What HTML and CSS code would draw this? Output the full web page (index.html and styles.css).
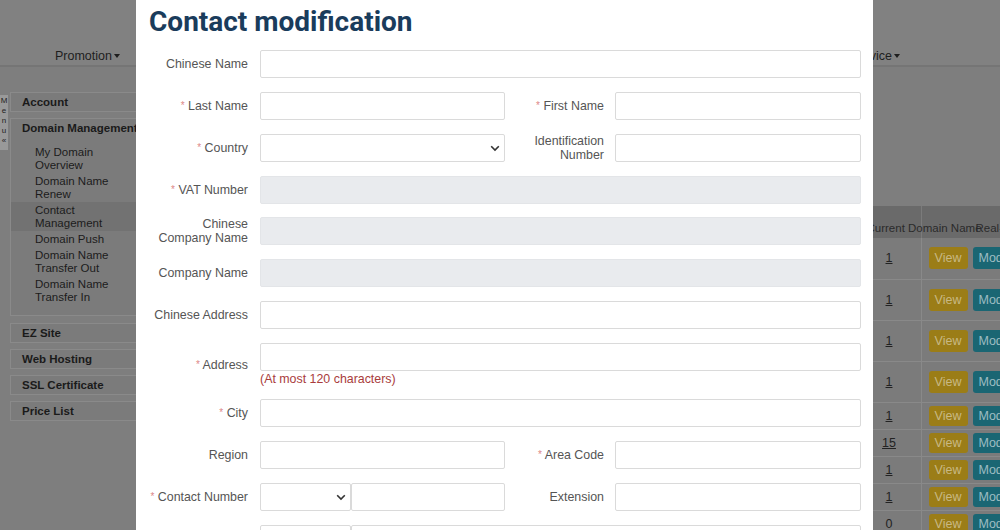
FILE: index.html
```html
<!DOCTYPE html>
<html lang="en">
<head>
<meta charset="utf-8">
<title>Contact modification</title>
<link rel="stylesheet" href="styles.css">
</head>
<body>
<div class="page">
  <header class="topbar">
    <span class="nav-item">Promotion<i class="caret"></i></span>
    <span class="nav-item nav-right">Service<i class="caret"></i></span>
  </header>
  <div class="layout">
    <div class="menu-tab"><span>M</span><span>e</span><span>n</span><span>u</span><span>«</span></div>
    <aside class="sidebar">
      <div class="sec"><div class="sec-title">Account</div></div>
      <div class="sec">
        <div class="sec-title">Domain Management</div>
        <ul class="submenu">
          <li>My Domain<br>Overview</li>
          <li>Domain Name<br>Renew</li>
          <li class="active">Contact<br>Management</li>
          <li>Domain Push</li>
          <li>Domain Name<br>Transfer Out</li>
          <li>Domain Name<br>Transfer In</li>
        </ul>
      </div>
      <div class="sec sec-gap"><div class="sec-title">EZ Site</div></div>
      <div class="sec"><div class="sec-title">Web Hosting</div></div>
      <div class="sec"><div class="sec-title">SSL Certificate</div></div>
      <div class="sec"><div class="sec-title">Price List</div></div>
    </aside>
    <main class="main">
      <table class="grid">
        <colgroup><col class="c-rest"><col class="c-count"><col class="c-act"></colgroup>
        <thead>
          <tr><th></th><th class="th-count">Current Domain Name</th><th class="th-act">Real-name Verification</th></tr>
        </thead>
        <tbody>
          <tr class="tall"><td></td><td class="count"><u>1</u></td><td class="act"><span class="btn view">View</span><span class="btn mod">Modify</span></td></tr>
          <tr class="tall"><td></td><td class="count"><u>1</u></td><td class="act"><span class="btn view">View</span><span class="btn mod">Modify</span></td></tr>
          <tr class="tall"><td></td><td class="count"><u>1</u></td><td class="act"><span class="btn view">View</span><span class="btn mod">Modify</span></td></tr>
          <tr class="tall"><td></td><td class="count"><u>1</u></td><td class="act"><span class="btn view">View</span><span class="btn mod">Modify</span></td></tr>
          <tr class="short"><td></td><td class="count"><u>1</u></td><td class="act"><span class="btn view">View</span><span class="btn mod">Modify</span></td></tr>
          <tr class="short"><td></td><td class="count"><u>15</u></td><td class="act"><span class="btn view">View</span><span class="btn mod">Modify</span></td></tr>
          <tr class="short"><td></td><td class="count"><u>1</u></td><td class="act"><span class="btn view">View</span><span class="btn mod">Modify</span></td></tr>
          <tr class="short"><td></td><td class="count"><u>1</u></td><td class="act"><span class="btn view">View</span><span class="btn mod">Modify</span></td></tr>
          <tr class="short"><td></td><td class="count">0</td><td class="act"><span class="btn view">View</span><span class="btn mod">Modify</span></td></tr>
        </tbody>
      </table>
    </main>
  </div>
</div>

<div class="modal">
  <h1 class="title">Contact modification</h1>
  <form class="form">
    <div class="row">
      <label class="lbl">Chinese Name</label>
      <div class="inp full"></div>
    </div>
    <div class="row">
      <label class="lbl"><b class="req">*</b> Last Name</label>
      <div class="inp half"></div>
      <label class="lbl lbl2"><b class="req">*</b> First Name</label>
      <div class="inp half2"></div>
    </div>
    <div class="row">
      <label class="lbl"><b class="req">*</b> Country</label>
      <div class="inp half sel"><svg class="chev" width="10" height="7" viewBox="0 0 10 7"><path d="M1.2 1.2 L5 5 L8.8 1.2" fill="none" stroke="#333" stroke-width="1.6"/></svg></div>
      <label class="lbl lbl2">Identification Number</label>
      <div class="inp half2"></div>
    </div>
    <div class="row row-tight">
      <label class="lbl"><b class="req">*</b> VAT Number</label>
      <div class="inp full dis"></div>
    </div>
    <div class="row">
      <label class="lbl">Chinese<br>Company Name</label>
      <div class="inp full dis"></div>
    </div>
    <div class="row">
      <label class="lbl">Company Name</label>
      <div class="inp full dis"></div>
    </div>
    <div class="row">
      <label class="lbl">Chinese Address</label>
      <div class="inp full"></div>
    </div>
    <div class="row row-hint">
      <label class="lbl"><b class="req">*</b> Address</label>
      <div class="fcol">
        <div class="inp"></div>
        <div class="hint">(At most 120 characters)</div>
      </div>
    </div>
    <div class="row">
      <label class="lbl"><b class="req">*</b> City</label>
      <div class="inp full"></div>
    </div>
    <div class="row">
      <label class="lbl">Region</label>
      <div class="inp half"></div>
      <label class="lbl lbl2"><b class="req">*</b> Area Code</label>
      <div class="inp half2"></div>
    </div>
    <div class="row">
      <label class="lbl"><b class="req">*</b> Contact Number</label>
      <div class="combo">
        <div class="inp sel small"><svg class="chev" width="10" height="7" viewBox="0 0 10 7"><path d="M1.2 1.2 L5 5 L8.8 1.2" fill="none" stroke="#333" stroke-width="1.6"/></svg></div>
        <div class="inp grow"></div>
      </div>
      <label class="lbl lbl2">Extension</label>
      <div class="inp half2"></div>
    </div>
    <div class="row">
      <label class="lbl">Fax Number</label>
      <div class="combo combo-full">
        <div class="inp sel small"><svg class="chev" width="10" height="7" viewBox="0 0 10 7"><path d="M1.2 1.2 L5 5 L8.8 1.2" fill="none" stroke="#333" stroke-width="1.6"/></svg></div>
        <div class="inp grow"></div>
      </div>
    </div>
  </form>
</div>
</body>
</html>
```

FILE: styles.css
```css
* { box-sizing: border-box; }
html, body { margin: 0; padding: 0; }
body {
  width: 1000px;
  height: 530px;
  overflow: hidden;
  position: relative;
  background: #7e7e7e;
  font-family: "Liberation Sans", Arial, sans-serif;
  color: #1c1c1c;
}

/* ---------- dimmed page behind the modal ---------- */
.page { width: 1000px; }
.topbar {
  height: 67px;
  background: #818181;
  border-bottom: 2px solid #757575;
  display: flex;
  padding: 48px 100px 0 55px;
}
.nav-item { font-size: 12.5px; line-height: 16px; color: #1e1e1e; white-space: nowrap; }
.nav-right { margin-left: auto; }
.caret {
  display: inline-block;
  width: 0; height: 0;
  border-left: 3.5px solid transparent;
  border-right: 3.5px solid transparent;
  border-top: 4px solid #1e1e1e;
  margin-left: 2px;
  vertical-align: 2px;
}

.layout { display: flex; }
.menu-tab {
  width: 8px;
  height: 55px;
  margin-top: 28px;
  background: #999;
  display: flex;
  flex-direction: column;
  align-items: center;
  padding-top: 1px;
  font-size: 8px;
  line-height: 10px;
  color: #222;
  flex-shrink: 0;
}
.sidebar { width: 150px; margin: 25px 0 0 2px; flex-shrink: 0; }
.sec { border: 1px solid #8a8a8a; background: #7b7b7b; margin-bottom: 6px; }
.sec-gap { margin-top: 7px; }
.sec-title {
  height: 18px;
  line-height: 18px;
  padding-left: 11px;
  font-size: 11.5px;
  font-weight: bold;
  color: #1a1a1a;
  white-space: nowrap;
}
.submenu { list-style: none; margin: 0; padding: 7px 0 10px; }
.submenu li {
  padding: 1.5px 0 1.5px 24px;
  font-size: 11.5px;
  line-height: 13px;
  color: #1c1c1c;
}
.submenu li.active { background: #727272; }

.main { flex: 1; padding-top: 139px; }
.grid { width: 900px; table-layout: fixed; border-collapse: collapse; }
.c-rest { width: 702px; }
.c-count { width: 59px; }
.c-act { width: 139px; }
.grid th {
  height: 32px;
  background: #6a6a6a;
  font-size: 11.5px;
  font-weight: normal;
  color: #2b2b2b;
  text-align: left;
  white-space: nowrap;
  vertical-align: bottom;
  padding: 0 0 4px 4px;
}
.grid th + th { border-left: 1px solid #7b7b7b; }
.grid th.th-act { padding-left: 54px; }
.grid td { background: #7b7b7b; border-bottom: 1px solid #898989; padding: 0; }
.grid td + td { border-left: 1px solid #898989; }
.tall td { height: 41px; }
.short td { height: 27px; }
.count { text-align: center; padding-right: 5px !important; font-size: 12.5px; color: #222; }
.act { padding-left: 7px !important; white-space: nowrap; }
.btn {
  display: inline-block;
  height: 22px;
  line-height: 22px;
  padding: 0 6px;
  border-radius: 3px;
  font-size: 12.5px;
  vertical-align: middle;
}
.short .btn { height: 20px; line-height: 20px; }
.view { background: #9b7d17; color: #c8b984; width: 39px; text-align: center; }
.mod { background: #1a6673; color: #9dbdc2; margin-left: 5px; }

/* ---------- modal ---------- */
.modal {
  position: absolute;
  left: 136px;
  top: 0;
  width: 737px;
  height: 530px;
  background: #fff;
  padding: 5px 12px 0 0;
}
.title {
  margin: 0 0 11px;
  padding-left: 13px;
  font-family: Roboto, "Liberation Sans", sans-serif;
  font-weight: 700;
  font-size: 28px;
  line-height: 34px;
  color: #1a3c5c;
}
.form { margin: 0; }
.row { display: flex; align-items: center; margin-bottom: 14px; }
.row-tight { margin-bottom: 13px; }
.row-hint { margin-bottom: 13px; }
.lbl {
  width: 112px;
  margin-right: 12px;
  flex-shrink: 0;
  text-align: right;
  font-size: 12.4px;
  line-height: 14px;
  color: #555;
}
.lbl2 { width: 99px; margin-right: 11px; }
.req { font-weight: normal; font-size: 10px; color: #d88; vertical-align: 1px; }
.inp {
  height: 28px;
  border: 1px solid #dadada;
  border-radius: 2px;
  background: #fff;
}
.full { flex: 1; }
.half { width: 245px; flex-shrink: 0; }
.half2 { width: 246px; flex-shrink: 0; }
.dis { background: #e9ebee; border-color: #e3e5e8; }
.sel { display: flex; align-items: center; justify-content: flex-end; padding-right: 4px; }
.chev { display: block; }
.combo { display: flex; width: 245px; flex-shrink: 0; }
.combo-full { flex: 1; width: auto; }
.small { width: 91px; flex-shrink: 0; }
.grow { flex: 1; }
.fcol { flex: 1; display: flex; flex-direction: column; }
.hint { margin-top: 1px; font-size: 12.4px; line-height: 14px; color: #a93c3c; }
```
